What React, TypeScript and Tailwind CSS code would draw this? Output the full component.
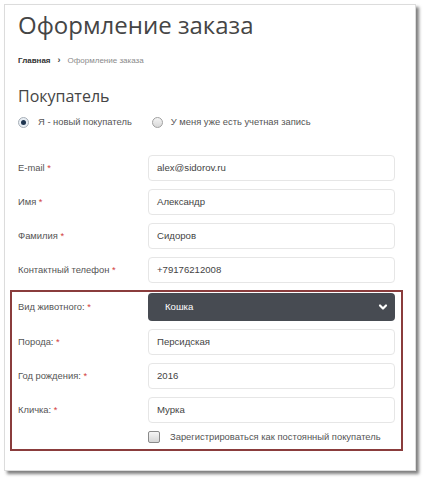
import React from "react";

const body = { fontFamily: '"Liberation Sans", Arial, sans-serif' };
const head = { fontFamily: '"Open Sans", "Noto Sans", sans-serif' };

function Star() {
  return <span className="text-[#d23c3c]"> *</span>;
}

function Row({ label, value }: { label: string; value: string }) {
  return (
    <div className="flex items-center h-[26px]">
      <div className="w-[130px] text-[9.4px] text-[#555]">
        {label}
        <Star />
      </div>
      <div className="w-[247px] h-[26px] border border-[#e6e6e6] rounded-[4px] flex items-center pl-[8px] text-[9.6px] text-[#444] bg-white">
        {value}
      </div>
    </div>
  );
}

export default function App() {
  return (
    <div className="w-[426px] h-[480px] bg-white relative overflow-hidden" style={body}>
      <div className="absolute left-[4px] top-[4px] w-[412px] h-[467px] bg-white border border-[#dcdcdc] shadow-[3px_3px_3px_rgba(0,0,0,0.5)] flex flex-col">
        <div className="h-[40px] leading-[40px] pl-[13px] text-[24px] text-[#454545]" style={head}>
          Оформление заказа
        </div>
        <div className="mt-[5px] h-[22px] flex items-center pl-[13px] text-[8px]">
          <span className="font-bold text-[#333]">Главная</span>
          <span className="ml-[7px] mr-[7px] font-bold text-[#444] text-[9px]">›</span>
          <span className="text-[#8a8a8a]">Оформление заказа</span>
        </div>
        <div className="mt-[10px] h-[28px] leading-[28px] pl-[13px] text-[16px] text-[#454545]" style={head}>
          Покупатель
        </div>
        <div className="mt-[4px] h-[16px] flex items-center pl-[13px] text-[9.4px] text-[#555]">
          <span className="w-[11px] h-[11px] rounded-full border border-[#a8b0b8] bg-[#e8eef4] flex items-center justify-center">
            <span className="w-[5px] h-[5px] rounded-full bg-[#1f3550]" />
          </span>
          <span className="ml-[9px]">Я - новый покупатель</span>
          <span className="ml-[20px] w-[11px] h-[11px] rounded-full border border-[#a0a0a0] bg-gradient-to-b from-[#f4f4f4] to-[#d8d8d8]" />
          <span className="ml-[8px]">У меня уже есть учетная запись</span>
        </div>
        <div className="mt-[25px] pl-[13px] flex flex-col gap-[8px]">
          <Row label="E-mail" value="alex@sidorov.ru" />
          <Row label="Имя" value="Александр" />
          <Row label="Фамилия" value="Сидоров" />
          <Row label="Контактный телефон" value="+79176212008" />
        </div>
        <div className="mt-[7px] ml-[5px] w-[393px] border-[2px] border-[#8a3c3c] pt-[1px] pl-[6px] pb-[5px] flex flex-col gap-[8px]">
          <div className="flex items-center h-[28px]">
            <div className="w-[130px] text-[9.4px] text-[#555]">
              Вид животного:
              <Star />
            </div>
            <div className="w-[247px] h-[28px] rounded-[4px] bg-[#474b52] flex items-center justify-between pl-[17px] pr-[7px] text-[9.6px] text-white">
              <span>Кошка</span>
              <svg width="10" height="8" viewBox="0 0 10 8">
                <path d="M2 2.5 L5 5.5 L8 2.5" fill="none" stroke="white" strokeWidth="2.2" strokeLinecap="round" strokeLinejoin="round" />
              </svg>
            </div>
          </div>
          <Row label="Порода:" value="Персидская" />
          <Row label="Год рождения:" value="2016" />
          <Row label="Кличка:" value="Мурка" />
          <div className="flex items-center h-[14px] -mt-[1px]">
            <div className="w-[130px]" />
            <span className="w-[12px] h-[12px] rounded-[2px] border border-[#8a8a8a] bg-gradient-to-b from-[#f6f6f6] to-[#d6d6d6]" />
            <span className="ml-[10px] text-[9.4px] text-[#555]">Зарегистрироваться как постоянный покупатель</span>
          </div>
        </div>
      </div>
    </div>
  );
}
